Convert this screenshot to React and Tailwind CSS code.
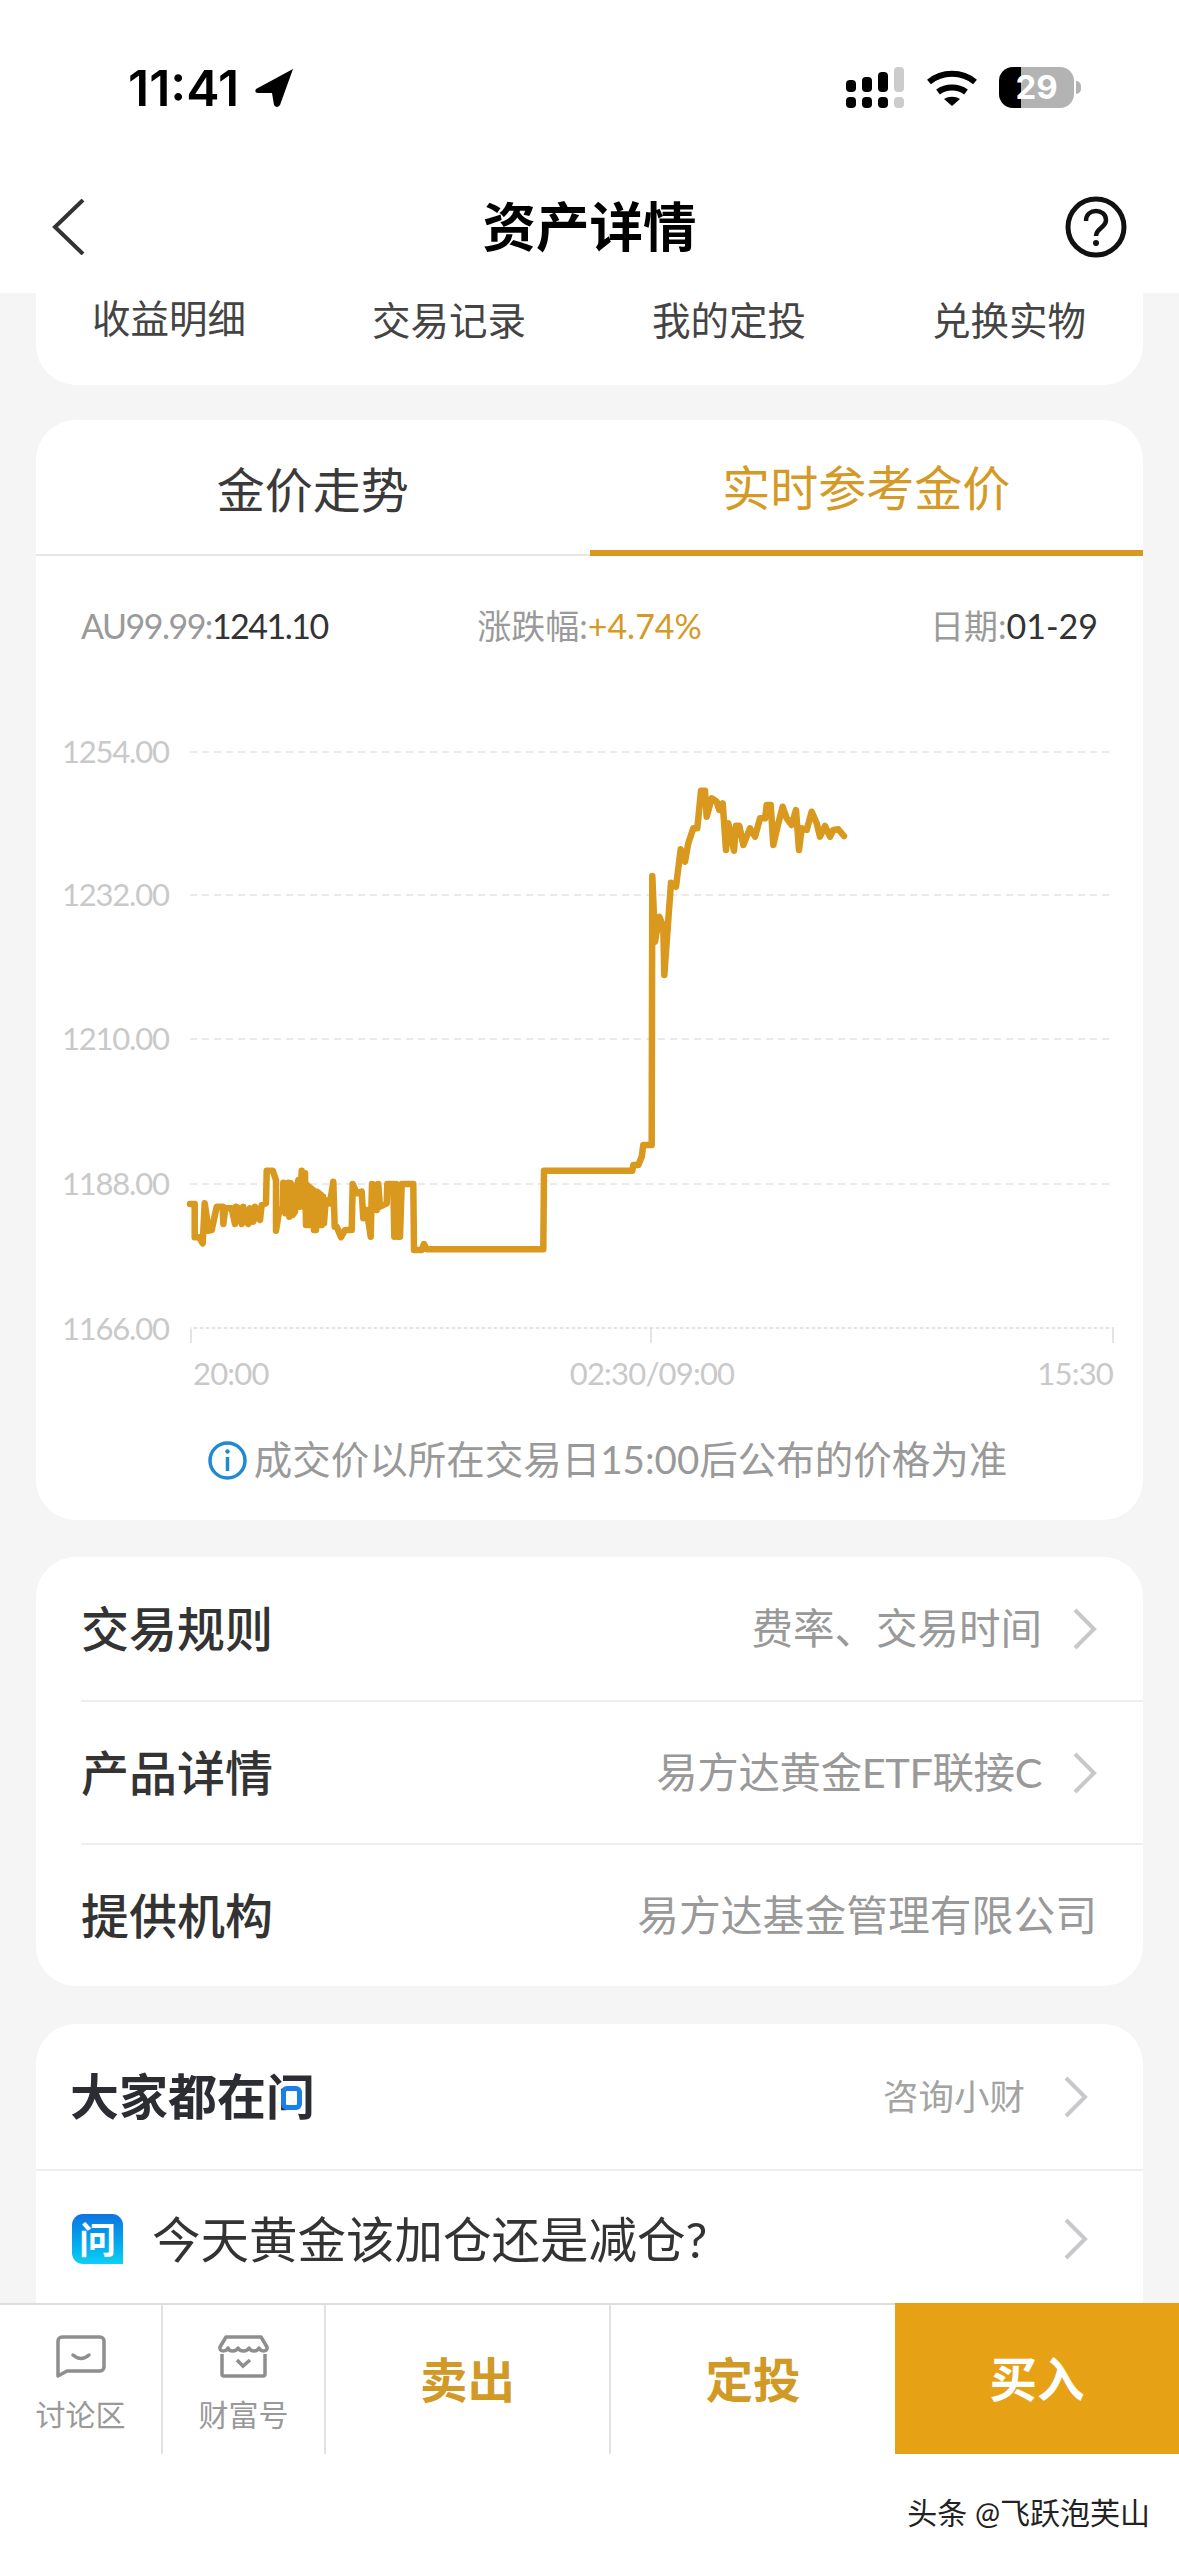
const GOLD = "#d9981e";

// chart line traced from the reference, page coordinates
const LEFT_PART = [
  [90,1332],[104,1332],[104,1432],[118,1432],[128,1450],[134,1330],[146,1412],[155,1410],[170,1340],[188,1340],
  [190,1392],[196,1345],[215,1345],[225,1392],[228,1340],[238,1345],[245,1392],[250,1340],[258,1385],[265,1392],[270,1345],[280,1385],
  [285,1340],[295,1375],[300,1380],[305,1335],[318,1330],[320,1232],[338,1232],[348,1260],[348,1412],[358,1350],[368,1350],
  [370,1268],[376,1360],[385,1268],[388,1370],[392,1270],[398,1365],[405,1355],[410,1280],[415,1260],[420,1340],[425,1232],[430,1340],[435,1240],[438,1395],[441,1275],
  [444,1395],[447,1280],[450,1395],[453,1285],[456,1395],[459,1290],[462,1410],[465,1295],[468,1410],[471,1295],[474,1395],[477,1300],[480,1395],[483,1305],[486,1395],[489,1310],[492,1390],[497,1320],[510,1330],[520,1265],
  [524,1400],[530,1400],[543,1432],[555,1410],[575,1410],[578,1272],[590,1300],[605,1295],[610,1375],[620,1350],[632,1430],
  [636,1272],[640,1350],[645,1275],[650,1350],[655,1272],[660,1340],[680,1330],[682,1272],[700,1272],[703,1430],[708,1272],[712,1430],[720,1430],
  [725,1272],[760,1272],[762,1470],[785,1470],[792,1452],[800,1468],[960,1468],
].map(([x, y]) => [160 + x / 3, 760 + y / 3]);

const RIGHT_PART = [
  [-170,1468],[-168,1232],[97,1232],[100,1215],[115,1215],[125,1190],[130,1155],[155,1155],[157,348],[165,545],
  [178,470],[190,500],[193,645],[200,545],[213,368],[228,380],[242,268],[255,305],[265,250],[280,205],[292,205],
  [303,92],[315,92],[320,170],[335,115],[350,125],[358,150],[368,130],[378,270],[385,190],[402,272],[408,197],
  [418,197],[430,255],[450,205],[465,230],[480,175],[495,175],[500,135],[512,135],[520,255],[535,190],[548,140],
  [560,175],[575,195],[588,150],[597,270],[605,205],[620,210],[635,155],[650,190],[660,230],[675,198],[690,230],
  [700,210],[715,208],[732,228],
].map(([x, y]) => [600 + x / 3, 760 + y / 3]);

const LINE = [...LEFT_PART, ...RIGHT_PART].map(([x, y]) => `${x.toFixed(1)},${y.toFixed(1)}`).join(" ");

const GRID_Y = [
  { y: 752, label: "1254.00" },
  { y: 895, label: "1232.00" },
  { y: 1039, label: "1210.00" },
  { y: 1184, label: "1188.00" },
];

const Chevron = ({ className = "" }) => (
  <svg viewBox="0 0 24 42" className={`w-[24px] h-[42px] ${className}`} fill="none" stroke="#c8c8cc" strokeWidth="4">
    <path d="M2 2l19 19L2 40" />
  </svg>
);

const StatusBar = () => (
  <div className="flex items-center justify-between h-[41px] mt-[67px] pl-[128px] pr-[98px]">
    <div className="flex items-center gap-[16px]">
      <span className="[font-family:Inter,sans-serif] text-[50px] font-semibold leading-none text-black">
        11:41
      </span>
      <svg viewBox="0 0 38 38" className="w-[38px] h-[38px]">
        <path d="M38 0 L1 20 Q-1 24 3 24 L17 24 L19 36 Q22 40 25 36 Z" fill="#000" />
      </svg>
    </div>
    <div className="flex items-center">
      <svg viewBox="0 0 58 41" className="w-[58px] h-[41px]" fill="#000">
        <rect x="0" y="13" width="10" height="12" rx="4" />
        <rect x="16" y="10" width="10" height="15" rx="4" />
        <rect x="32" y="5" width="10" height="20" rx="4" />
        <rect x="48" y="0" width="10" height="25" rx="4" fill="#cccccc" />
        <rect x="0" y="30" width="10" height="11" rx="4" />
        <rect x="16" y="30" width="10" height="11" rx="4" />
        <rect x="32" y="30" width="10" height="11" rx="4" />
        <rect x="48" y="30" width="10" height="11" rx="4" fill="#cccccc" />
      </svg>
      <svg viewBox="0 0 50 38" className="w-[50px] h-[38px] ml-[23px]" fill="none" stroke="#000" strokeWidth="6">
        <path d="M2 13c13-11 33-11 46 0" />
        <path d="M11 23c8-6 20-6 28 0" />
        <path d="M25 37l-8-7c5-3 11-3 16 0z" fill="#000" stroke="none" />
      </svg>
      <div className="flex items-center justify-center w-[75px] h-[41px] ml-[22px] rounded-[14px] bg-[linear-gradient(90deg,#000_29%,#b3b3b3_29%)] [font-family:Inter,sans-serif] text-[33px] font-bold leading-none text-white">
        29
      </div>
      <div className="w-[5px] h-[13px] ml-[2px] rounded-r-full bg-[#b3b3b3]" />
    </div>
  </div>
);

const Header = () => (
  <div className="bg-white h-[293px] shrink-0">
    <StatusBar />
    <div className="flex items-center justify-between h-[62px] mt-[88px] px-[52px]">
      <div className="w-[80px]">
        <svg viewBox="0 0 33 56" className="w-[33px] h-[56px]" fill="none" stroke="#333" strokeWidth="4">
          <path d="M31 1L3 28l28 27" />
        </svg>
      </div>
      <div className="text-[53.5px] font-bold text-black leading-none">资产详情</div>
      <div className="w-[80px] flex justify-end">
        <svg viewBox="0 0 62 62" className="w-[62px] h-[62px]" fill="none" stroke="#111" strokeWidth="5">
          <circle cx="31" cy="31" r="28" />
          <path d="M21 25c0-7 5-10 10-10s10 3 10 9c0 8-10 8-10 16" strokeWidth="4.5" />
          <circle cx="31" cy="47" r="3" fill="#111" stroke="none" />
        </svg>
      </div>
    </div>
  </div>
);

const QuickLinks = () => (
  <div className="bg-white h-[92px] rounded-b-[40px] flex gap-[126px] pl-[56px] pt-0 text-[38.5px] leading-[54px] text-[#444]">
    <span className="-mt-[2px]">收益明细</span>
    <span>交易记录</span>
    <span>我的定投</span>
    <span>兑换实物</span>
  </div>
);

const Chart = () => (
  <svg viewBox="36 694 1107 706" className="block w-[1107px] h-[706px]" fill="none">
    {GRID_Y.map((g) => (
      <g key={g.y}>
        <line x1="190" x2="1110" y1={g.y} y2={g.y} stroke="#e4e4e4" strokeWidth="1.5" strokeDasharray="7 5" />
        <text x="62" y={g.y + 11} className="fill-[#c9c9c9] text-[31px] tracking-[-1.2px]">{g.label}</text>
      </g>
    ))}
    <text x="62" y="1340" className="fill-[#c9c9c9] text-[31px] tracking-[-1.2px]">1166.00</text>
    <path d="M191 1343V1328H1113V1343M651 1328V1343" stroke="#dcdcdc" strokeWidth="1.5" />
    <line x1="191" x2="1113" y1="1328" y2="1328" stroke="#fff" strokeWidth="1.5" strokeDasharray="3 3" />
    <polyline points={LINE} stroke={GOLD} strokeWidth="6.5" strokeLinejoin="round" strokeLinecap="round" />
    <text x="193" y="1385" className="fill-[#c9c9c9] text-[31px] tracking-[-0.8px]">20:00</text>
    <text x="652" y="1385" textAnchor="middle" className="fill-[#c9c9c9] text-[31px] tracking-[-0.8px]">02:30/09:00</text>
    <text x="1113" y="1385" textAnchor="end" className="fill-[#c9c9c9] text-[31px] tracking-[-0.8px]">15:30</text>
  </svg>
);

const GoldCard = () => (
  <div className="bg-white rounded-[40px] mt-[35px] overflow-hidden">
    <div className="grid grid-cols-2 h-[136px] border-b-2 border-[#e6e6e6] text-[48px] leading-none">
      <div className="flex items-center justify-center pt-[6px] text-[#3a3a3a]">金价走势</div>
      <div className="flex items-center justify-center pt-[6px] -mb-[2px] border-b-[6px] border-[#d9981e] text-[#d59a26]">
        实时参考金价
      </div>
    </div>
    <div className="grid grid-cols-3 items-center h-[138px] px-[45px] text-[34px] whitespace-nowrap text-[#9a9a9a]">
      <div className="tracking-[-1.5px]">AU99.99:<span className="text-[#333]">1241.10</span></div>
      <div className="text-center">涨跌幅:<span className="text-[#d59a26]">+4.74%</span></div>
      <div className="text-right">日期:<span className="text-[#333]">01-29</span></div>
    </div>
    <Chart />
    <div className="flex items-center justify-center h-[120px] pl-[36px] gap-[7px] text-[38.5px] text-[#999]">
      <svg viewBox="0 0 39 39" className="w-[39px] h-[39px]" fill="none" stroke="#1f8ad1" strokeWidth="3.5">
        <circle cx="19.5" cy="19.5" r="17.5" />
        <path d="M19.5 16v14" />
        <circle cx="19.5" cy="10.5" r="2.2" fill="#1f8ad1" stroke="none" />
      </svg>
      <span>成交价以所在交易日15:00后公布的价格为准</span>
    </div>
  </div>
);

const INFO_ROWS = [
  { label: "交易规则", value: "费率、交易时间", arrow: true, valueClass: "text-[41.5px]" },
  { label: "产品详情", value: "易方达黄金ETF联接C", arrow: true, valueClass: "text-[41.5px] tracking-[-0.4px]" },
  { label: "提供机构", value: "易方达基金管理有限公司", arrow: false, valueClass: "text-[41.8px]" },
];

const InfoCard = () => (
  <div className="bg-white rounded-[40px] mt-[37px]">
    {INFO_ROWS.map((row, i) => (
      <div
        key={row.label}
        className={`flex items-center justify-between h-[143px] ml-[45px] pr-[46px] ${i > 0 ? "border-t-2 border-[#eeeeee]" : ""}`}
      >
        <span className="text-[48px] font-medium text-[#333]">{row.label}</span>
        <span className={`flex items-center gap-[31px] text-[#999] ${row.valueClass}`}>
          {row.value}
          {row.arrow && <Chevron />}
        </span>
      </div>
    ))}
  </div>
);

const AskCard = () => (
  <div className="bg-white rounded-t-[40px] mt-[38px] h-[400px]">
    <div className="flex items-center justify-between h-[147px] pl-[34px] pr-[55px] border-b-2 border-[#eeeeee]">
      <span className="text-[49px] font-bold text-[#2b2d33] leading-none">
        大家都在
        <span className="relative inline-block">
          问
          <span className="absolute left-[15px] top-[14px] w-[21px] h-[24px] rounded-[6px] border-[5px] border-[#1a7fe8] bg-white" />
        </span>
      </span>
      <span className="flex items-center gap-[39px] text-[35.5px] text-[#a3a3a3]">
        咨询小财
        <Chevron />
      </span>
    </div>
    <div className="flex items-center justify-between pt-[43px] pl-[36px] pr-[55px]">
      <div className="flex items-center gap-[29px]">
        <div className="flex items-center justify-center w-[51px] h-[50px] rounded-[11px] rounded-br-none bg-gradient-to-b from-[#1272e0] to-[#10d0f5] text-[37px] font-bold leading-none text-white">
          问
        </div>
        <span className="text-[48.5px] leading-none text-[#333]">今天黄金该加仓还是减仓?</span>
      </div>
      <Chevron />
    </div>
  </div>
);

const BottomBar = () => (
  <div className="bg-white shrink-0 h-[253px]">
    <div className="flex h-[151px] border-t-2 border-[#dddddd]">
      <div className="flex flex-col items-center w-[163px] pt-[30px] border-r-2 border-[#e2e2e2]">
        <svg viewBox="0 0 50 43" className="w-[50px] h-[43px]" fill="none" stroke="#8e8e8e" strokeWidth="3.5">
          <path d="M6 2h38a4 4 0 0 1 4 4v26a4 4 0 0 1-4 4H11l-9 5V6a4 4 0 0 1 4-4z" strokeLinejoin="round" />
          <path d="M17 20q8 7 16 0" strokeLinecap="round" />
        </svg>
        <span className="mt-[21px] text-[30px] leading-none text-[#999]">讨论区</span>
      </div>
      <div className="flex flex-col items-center w-[163px] pt-[30px] border-r-2 border-[#e2e2e2]">
        <svg viewBox="0 0 51 43" className="w-[51px] h-[43px]" fill="none" stroke="#8e8e8e" strokeWidth="3.5">
          <path d="M8 2h35l6 10c1 5-6 5-8 1-2 4-8 4-10 0-2 4-9 4-11 0-2 4-9 4-10 0-2 4-9 4-8-1z" strokeLinejoin="round" />
          <path d="M4 19v20a2 2 0 0 0 2 2h39a2 2 0 0 0 2-2V19" />
          <path d="M19 25l6 6 7-6" />
        </svg>
        <span className="mt-[21px] text-[30px] leading-none text-[#999]">财富号</span>
      </div>
      <div className="flex items-center justify-center w-[285px] border-r-2 border-[#e2e2e2] text-[47.5px] font-bold text-[#d19a26]">卖出</div>
      <div className="flex items-center justify-center w-[284px] text-[47.5px] font-bold text-[#d19a26]">定投</div>
      <div className="flex items-center justify-center flex-1 -mt-[2px] bg-[#e6a114] text-[47.5px] font-bold text-white">买入</div>
    </div>
    <div className="flex justify-end pr-[29px] pt-[43px] text-[30px] leading-none text-[#222]">头条 @飞跃泡芙山</div>
  </div>
);

export default function App() {
  return (
    <div className="flex flex-col w-[1179px] h-[2556px] overflow-hidden bg-[#f5f5f5] [font-family:Lato,'Noto_Sans_CJK_SC',sans-serif]">
      <Header />
      <div className="flex-1 min-h-0 overflow-hidden px-[36px]">
        <QuickLinks />
        <GoldCard />
        <InfoCard />
        <AskCard />
      </div>
      <BottomBar />
    </div>
  );
}
